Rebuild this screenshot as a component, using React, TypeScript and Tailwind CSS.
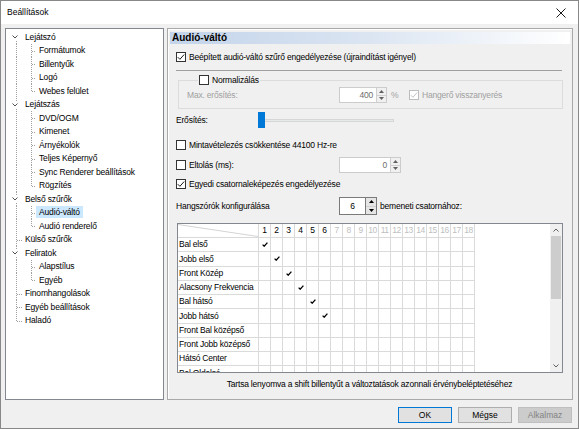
import React from 'react';

interface Node {
  label: string;
  level: 0 | 1;
  exp?: boolean;
  last?: boolean;
  sel?: boolean;
}

const TREE: Node[] = [
  { label: 'Lejátszó', level: 0, exp: true },
  { label: 'Formátumok', level: 1 },
  { label: 'Billentyűk', level: 1 },
  { label: 'Logó', level: 1 },
  { label: 'Webes felület', level: 1, last: true },
  { label: 'Lejátszás', level: 0, exp: true },
  { label: 'DVD/OGM', level: 1 },
  { label: 'Kimenet', level: 1 },
  { label: 'Árnyékolók', level: 1 },
  { label: 'Teljes Képernyő', level: 1 },
  { label: 'Sync Renderer beállítások', level: 1 },
  { label: 'Rögzítés', level: 1, last: true },
  { label: 'Belső szűrők', level: 0, exp: true },
  { label: 'Audió-váltó', level: 1, sel: true },
  { label: 'Audió renderelő', level: 1, last: true },
  { label: 'Külső szűrők', level: 0 },
  { label: 'Feliratok', level: 0, exp: true },
  { label: 'Alapstílus', level: 1 },
  { label: 'Egyéb', level: 1, last: true },
  { label: 'Finomhangolások', level: 0 },
  { label: 'Egyéb beállítások', level: 0 },
  { label: 'Haladó', level: 0, last: true },
];

const CHANNELS = [
  'Bal első',
  'Jobb első',
  'Front Közép',
  'Alacsony Frekvencia',
  'Bal hátsó',
  'Jobb hátsó',
  'Front Bal középső',
  'Front Jobb középső',
  'Hátsó Center',
  'Bal Oldalsó',
];

const COLS = Array.from({ length: 18 }, (_, i) => i + 1);

// dotted connector line for the tree
function Dots({ x1, y1, x2, y2 }: { x1: number; y1: number; x2: number; y2: number }) {
  return <line x1={x1} y1={y1} x2={x2} y2={y2} stroke="#a0a0a0" strokeDasharray="1 1" />;
}

function TreeRow({ node, first }: { node: Node; first: boolean }) {
  const w = node.level === 0 ? 16 : 30;
  const c = 7;
  return (
    <div className="h-[13.5px] flex items-center whitespace-nowrap">
      <svg width={w} height="13.5" className="shrink-0" shapeRendering="crispEdges">
        {node.level === 0 && node.exp && (
          <>
            {!first && <Dots x1={10.5} y1={0} x2={10.5} y2={c - 3} />}
            <Dots x1={10.5} y1={c + 4} x2={10.5} y2={13.5} />
          </>
        )}
        {node.level === 0 && !node.exp && (
          <>
            <Dots x1={10.5} y1={0} x2={10.5} y2={node.last ? c : 13.5} />
            <Dots x1={11} y1={c + 0.5} x2={16} y2={c + 0.5} />
          </>
        )}
        {node.level === 1 && (
          <>
            <Dots x1={10.5} y1={0} x2={10.5} y2={13.5} />
            <Dots x1={25.5} y1={0} x2={25.5} y2={node.last ? c : 13.5} />
            <Dots x1={26} y1={c + 0.5} x2={30} y2={c + 0.5} />
          </>
        )}
      </svg>
      {node.level === 0 && node.exp && (
        <svg width="16" height="13.5" className="shrink-0 -ml-[16px]">
          <path d="M6.5 5.5 L9 8 L11.5 5.5" fill="none" stroke="#505050" strokeWidth="1" />
        </svg>
      )}
      <span className={node.sel ? 'px-[3px] leading-[12px] bg-[#cce8ff]' : 'px-[3px] leading-[12px]'}>
        {node.label}
      </span>
    </div>
  );
}

function Box({ checked, disabled }: { checked?: boolean; disabled?: boolean }) {
  return (
    <span
      className={
        disabled
          ? 'w-[10px] h-[10px] shrink-0 border border-[#bcbcbc] bg-white flex items-center justify-center'
          : 'w-[10px] h-[10px] shrink-0 border border-[#333333] bg-white flex items-center justify-center'
      }
    >
      {checked && (
        <svg width="8" height="8" viewBox="0 0 8 8">
          <path d="M0.8 4.2 L2.9 6.3 L7.2 1.5" fill="none" stroke={disabled ? '#bcbcbc' : '#000'} strokeWidth="0.9" />
        </svg>
      )}
    </span>
  );
}

function Arrows({ dark }: { dark?: boolean }) {
  const fill = dark ? '#000' : '#606060';
  return (
    <div
      className={
        dark
          ? 'w-[11px] flex flex-col border-l border-[#7a7a7a] bg-[#e5e5e5]'
          : 'w-[10px] flex flex-col border-l border-[#d0d0d0] bg-[#f0f0f0]'
      }
    >
      <div className="flex-1 flex items-center justify-center border-b border-[#d0d0d0]">
        <svg width="5" height="3"><path d="M0 3 L2.5 0 L5 3 Z" fill={fill} /></svg>
      </div>
      <div className="flex-1 flex items-center justify-center">
        <svg width="5" height="3"><path d="M0 0 L2.5 3 L5 0 Z" fill={fill} /></svg>
      </div>
    </div>
  );
}

export default function App() {
  return (
    <div className="w-[579px] h-[429px] bg-[#f0f0f0] border border-[#888888] flex flex-col overflow-hidden text-black font-['Liberation_Sans',Arial,sans-serif]">
      {/* title bar */}
      <div className="h-[23px] bg-white flex items-center justify-between pl-[6px] pr-[12px]">
        <span className="text-[8.5px]">Beállítások</span>
        <svg width="10" height="10" viewBox="0 0 10 10">
          <path d="M0.5 0.5 L9.5 9.5 M9.5 0.5 L0.5 9.5" stroke="#000" strokeWidth="0.9" />
        </svg>
      </div>

      <div className="flex pl-[4px] pt-[4px] gap-[3px]">
        {/* page tree */}
        <div className="w-[159px] h-[372px] border border-[#828790] bg-white pt-[1px] text-[8.5px] tracking-[-0.15px]">
          {TREE.map((n, i) => (
            <TreeRow key={n.label} node={n} first={i === 0} />
          ))}
        </div>

        {/* property page */}
        <div className="w-[406px] h-[372px] border border-[#a9a9a9] shadow-[inset_1px_1px_0_#ffffff] pt-[3px] flex flex-col text-[8.5px] tracking-[-0.2px]">
          <div className="mx-[2px] h-[12px] flex items-center pl-[2px] bg-linear-to-r from-[#c3d4ea] via-[#dbe5f2] to-white">
            <span className="text-[10px] font-bold tracking-normal leading-none">Audió-váltó</span>
          </div>

          <div className="pl-[8px] pr-[9px] flex flex-col">
            <div className="mt-[6px] h-[14px] flex items-center gap-[3px]">
              <Box checked />
              <span>Beépített audió-váltó szűrő engedélyezése (újraindítást igényel)</span>
            </div>

            <div className="mt-[6px] h-px bg-[#a0a0a0] mr-px" />

            <fieldset className="mt-[4px] ml-[2px] border border-[#dcdcdc] pl-[8px] pb-[5px]">
              <legend className="ml-[11px] px-[1px] flex items-center gap-[3px] h-[10px]">
                <Box />
                <span>Normalizálás</span>
              </legend>
              <div className="mt-[2px] h-[16px] flex items-center text-[#a0a0a0]">
                <span className="w-[152px]">Max. erősítés:</span>
                <div className="w-[48px] h-[16px] flex border border-[#cccccc] bg-white">
                  <span className="flex-1 flex items-center justify-end pr-[3px] text-[#6d6d6d]">400</span>
                  <Arrows />
                </div>
                <span className="ml-[4px] w-[7px]">%</span>
                <div className="ml-[11px] flex items-center gap-[3px]">
                  <Box checked disabled />
                  <span>Hangerő visszanyerés</span>
                </div>
              </div>
            </fieldset>

            <div className="mt-[3px] h-[16px] flex items-center">
              <span className="w-[82px]">Erősítés:</span>
              <div className="relative w-[136px] h-[16px] flex items-center">
                <div className="w-full h-[3px] bg-[#e7eaea] border border-[#d6d6d6]" />
                <div className="absolute left-0 top-0 w-[7px] h-[16px] bg-[#0078d7]" />
              </div>
            </div>

            <div className="mt-[10px] h-[14px] flex items-center gap-[3px]">
              <Box />
              <span>Mintavételezés csökkentése 44100 Hz-re</span>
            </div>

            <div className="mt-[5px] h-[16px] flex items-center">
              <div className="w-[163px] flex items-center gap-[3px]">
                <Box />
                <span>Eltolás (ms):</span>
              </div>
              <div className="w-[62px] h-[16px] flex border border-[#cccccc] bg-white">
                <span className="flex-1 flex items-center justify-end pr-[3px] text-[#6d6d6d]">0</span>
                <Arrows />
              </div>
            </div>

            <div className="mt-[4px] h-[14px] flex items-center gap-[3px]">
              <Box checked />
              <span>Egyedi csatornaleképezés engedélyezése</span>
            </div>

            <div className="mt-[6px] h-[18px] flex items-center">
              <span className="w-[163px]">Hangszórók konfigurálása</span>
              <div className="w-[38px] h-[18px] flex border border-[#7a7a7a] bg-white">
                <span className="flex-1 flex items-center justify-center">6</span>
                <Arrows dark />
              </div>
              <span className="ml-[3px]">bemeneti csatornához:</span>
            </div>

            {/* channel matrix */}
            <div className="mt-[8px] ml-px h-[150px] border border-[#828790] bg-white flex">
              <div className="flex-1 overflow-hidden">
                <div className="w-[297px] h-[14px] flex border-b border-[#dadada]">
                  <div className="w-[81px] shrink-0 border-r border-[#dadada]">
                    <svg width="80" height="13">
                      <line x1="0" y1="0.5" x2="80" y2="12.5" stroke="#d4d4d4" />
                    </svg>
                  </div>
                  {COLS.map((n) => (
                    <div
                      key={n}
                      className={
                        n <= 6
                          ? 'w-[12px] shrink-0 border-r border-[#dadada] flex items-center justify-center tracking-[-0.4px]'
                          : 'w-[12px] shrink-0 border-r border-[#dadada] flex items-center justify-center tracking-[-0.6px] text-[#c0c0c0]'
                      }
                    >
                      {n}
                    </div>
                  ))}
                </div>
                {CHANNELS.map((ch, r) => (
                  <div key={ch} className="w-[297px] h-[14.25px] flex border-b border-[#dadada]">
                    <div className="w-[81px] shrink-0 border-r border-[#dadada] pl-[1px] flex items-center whitespace-nowrap overflow-hidden">
                      {ch}
                    </div>
                    {COLS.map((n) => (
                      <div key={n} className="w-[12px] shrink-0 border-r border-[#dadada] flex items-center justify-center">
                        {r < 6 && n === r + 1 && (
                          <svg width="6" height="5" viewBox="0 0 6 5">
                            <path d="M0.6 2.6 L2.2 4.2 L5.4 0.6" fill="none" stroke="#000" strokeWidth="1.3" />
                          </svg>
                        )}
                      </div>
                    ))}
                  </div>
                ))}
              </div>
              <div className="w-[12px] bg-[#f0f0f0] flex flex-col">
                <div className="h-[12px] flex items-center justify-center">
                  <svg width="6" height="4"><path d="M0.5 3.5 L3 1 L5.5 3.5" fill="none" stroke="#606060" /></svg>
                </div>
                <div className="h-[63px] mx-px bg-[#cdcdcd]" />
                <div className="flex-1" />
                <div className="h-[12px] flex items-center justify-center">
                  <svg width="6" height="4"><path d="M0.5 0.5 L3 3 L5.5 0.5" fill="none" stroke="#606060" /></svg>
                </div>
              </div>
            </div>

            <div className="mt-[5px] h-[13px] flex items-center justify-center whitespace-nowrap">
              Tartsa lenyomva a shift billentyűt a változtatások azonnali érvénybeléptetéséhez
            </div>
          </div>
        </div>
      </div>

      {/* dialog buttons */}
      <div className="mt-[7px] flex justify-end gap-[6px] pr-[6px] text-[8.5px]">
        <button className="w-[54px] h-[16px] border border-[#0078d7] bg-[#e1e1e1]">OK</button>
        <button className="w-[54px] h-[16px] border border-[#adadad] bg-[#e1e1e1]">Mégse</button>
        <button className="w-[54px] h-[16px] border border-[#bfbfbf] bg-[#cccccc] text-[#838383]">Alkalmaz</button>
      </div>
    </div>
  );
}
